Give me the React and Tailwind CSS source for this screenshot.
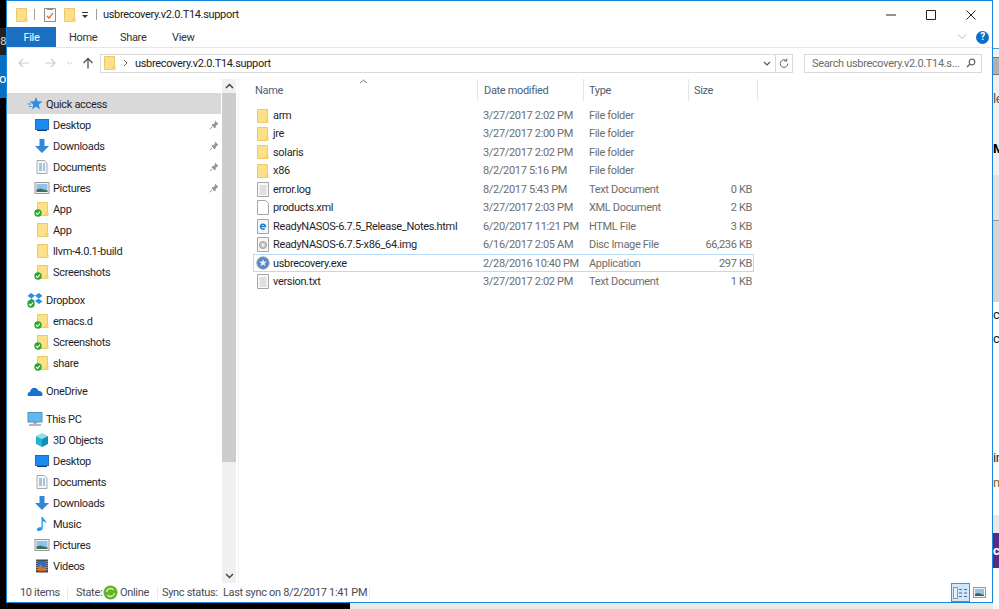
import React from "react";

const Check = () => (
  <svg width="8" height="8" viewBox="0 0 8 8" className="absolute left-0 bottom-0">
    <circle cx="4" cy="4" r="3.7" fill="#2aa52f" />
    <path d="M2 4l1.500 1.500L6 2.600" fill="none" stroke="#fff" strokeWidth="1.100" />
  </svg>
);

const Folder = ({ check }) => (
  <span className="relative inline-block w-[16px] h-[16px] shrink-0">
    <svg width="16" height="16" viewBox="0 0 16 16" className="block">
      <path d="M3.500 1.500h10v13h-10z" fill="#fde08a" stroke="#ecc969" />
      <path d="M11.500 11h3v4h-3z" fill="#f7d26e" />
    </svg>
    {check && <Check />}
  </span>
);

const Desktop = () => (
  <svg width="16" height="16" viewBox="0 0 16 16" className="shrink-0">
    <rect x="1.500" y="2.500" width="13" height="10" fill="#1a8cf0" stroke="#1b6fb8" />
    <path d="M3 13.500h10" stroke="#0b3f70" />
  </svg>
);
const Download = () => (
  <svg width="16" height="16" viewBox="0 0 16 16" className="shrink-0">
    <path d="M5.500 1h5v7h4.500L8 15 1 8h4.500z" fill="#2f88d8" />
  </svg>
);
const Doc = () => (
  <svg width="16" height="16" viewBox="0 0 16 16" className="shrink-0">
    <path d="M3 1.500h7.500l2.500 2.500v10.500H3z" fill="#f6f6f6" stroke="#a9a9a9" />
    <path d="M5 5h6M5 7h6M5 9h6M5 11h6" stroke="#3f9be0" strokeWidth="1" strokeDasharray="3 1" />
  </svg>
);
const Pics = () => (
  <svg width="16" height="16" viewBox="0 0 16 16" className="shrink-0">
    <rect x="1" y="2.500" width="14" height="11" fill="#f2f2f2" stroke="#9a9a9a" />
    <rect x="2.500" y="4" width="11" height="8" fill="#8fc3ee" />
    <path d="M2.500 12V9.500l4-1 7 2V12z" fill="#3f6f58" />
  </svg>
);
const Pin = () => (
  <svg width="10" height="10" viewBox="0 0 10 10">
    <path d="M6 .5l3.500 3.500-1.200.4-1.500 1.500-.2 1.800-1.100.6-3-3 .7-1 1.700-.3L6 2z" fill="#8f979f" />
    <path d="M3 7L.7 9.300" stroke="#8f979f" />
  </svg>
);
const Dropbox = () => (
  <span className="relative inline-block w-[16px] h-[16px] shrink-0">
    <svg width="16" height="16" viewBox="0 0 16 16" className="block">
      <path d="M4 1l4 2.500L4.500 6.500.5 4zM12 1L8 3.500l3.500 3 4-2.500zM4.500 6.500L.5 9.500 4 12l4-3zM11.500 6.500l4 3L12 12 8 9z" fill="#2b8de0" />
    </svg>
    <Check />
  </span>
);
const OneDrive = () => (
  <svg width="16" height="16" viewBox="0 0 16 16" className="shrink-0">
    <path d="M1 13c-1-2 0-4 2-4 .5-3 3-5 5.500-4 1.500.5 2.500 1.500 3 3 2-.5 4 1 4 3 0 1-.3 2-1 2z" fill="#1473d0" />
  </svg>
);
const PC = () => (
  <svg width="16" height="16" viewBox="0 0 16 16" className="shrink-0">
    <rect x="1" y="1.500" width="14" height="9.500" fill="#5fb8f3" stroke="#5c8fb5" />
    <path d="M6 12h4M2 14h12" stroke="#9a9fa5" strokeWidth="1.500" />
  </svg>
);
const Cube = () => (
  <svg width="16" height="16" viewBox="0 0 16 16" className="shrink-0">
    <path d="M2 4l6-3 6 3-6 3z" fill="#8be0ee" />
    <path d="M2 4l6 3v8l-6-3z" fill="#25b3d3" />
    <path d="M14 4L8 7v8l6-3z" fill="#0f8fb5" />
  </svg>
);
const Music = () => (
  <svg width="16" height="16" viewBox="0 0 16 16" className="shrink-0">
    <path d="M7.500 1h1.300c.3 2 3.500 3 3.700 6.500-1-1.500-2.500-2-3.700-2.300V12c0 2-2 3-4 3-1.500 0-2.300-1-1.800-2 .6-1.200 2.800-2 4.500-1.500z" fill="#1e9af0" />
  </svg>
);
const Videos = () => (
  <svg width="16" height="16" viewBox="0 0 16 16" className="shrink-0">
    <rect x="2" y="1.500" width="12" height="13" fill="#4a4a4a" />
    <rect x="4" y="3" width="8" height="10" fill="#1f6fd0" />
    <path d="M4 9l3-3 2 4 3-2v5H4z" fill="#d8702a" />
    <path d="M3 3v10M13 3v10" stroke="#ddd" strokeDasharray="1 1" />
  </svg>
);
const Star = () => (
  <svg width="16" height="16" viewBox="0 0 16 16" className="shrink-0">
    <path d="M9 1l1.700 4.300 4.800.3-3.700 3 1.200 4.700L9 10.700l-4 2.600 1.200-4.700-3.700-3 4.800-.3z" fill="#2f8fe0" />
    <path d="M4 8H.5M4.500 10.500H2" stroke="#2f8fe0" />
  </svg>
);

const iconFor = {
  folder: <Folder />,
  check: <Folder check />,
  desktop: <Desktop />,
  down: <Download />,
  doc: <Doc />,
  pics: <Pics />,
  music: <Music />,
  videos: <Videos />,
  cube: <Cube />,
  dropbox: <Dropbox />,
  onedrive: <OneDrive />,
  pc: <PC />,
  star: <Star />,
};

const NavRow = ({ icon, label, top, pin, active }) => (
  <div className={`h-[21px] flex items-center shrink-0 gap-[3px] ${top ? "pl-[20px]" : "pl-[27px]"} ${active ? "bg-[#d9d9d9]" : ""}`}>
    {iconFor[icon]}
    <span className="flex-1 pt-[1px] text-[#1f1f2b] whitespace-nowrap">{label}</span>
    {pin && <span className="mr-[2px] flex"><Pin /></span>}
  </div>
);

const TxtIcon = () => (
  <svg width="12" height="15" viewBox="0 0 12 15" className="shrink-0">
    <path d="M.5.500h11v14H.5z" fill="#fafafa" stroke="#a5a5a5" />
    <path d="M2.500 4h7M2.500 6h7M2.500 8h7M2.500 10h7M2.500 12h7" stroke="#c4c4c4" />
  </svg>
);
const BlankIcon = () => (
  <svg width="12" height="15" viewBox="0 0 12 15" className="shrink-0">
    <path d="M.5.500h8l3 3v11H.5z" fill="#fff" stroke="#a5a5a5" />
  </svg>
);
const HtmlIcon = () => (
  <svg width="12" height="15" viewBox="0 0 12 15" className="shrink-0">
    <path d="M.5.500h11v14H.5z" fill="#f6f6f6" stroke="#a5a5a5" />
    <path d="M3.500 7.500h5a2.500 2.500 0 1 0-.8 2" fill="none" stroke="#1c7fd6" strokeWidth="1.500" />
  </svg>
);
const ImgIcon = () => (
  <svg width="12" height="15" viewBox="0 0 12 15" className="shrink-0">
    <path d="M.5.500h11v14H.5z" fill="#f6f6f6" stroke="#a5a5a5" />
    <circle cx="6" cy="8" r="3.500" fill="#cfcfcf" stroke="#9a9a9a" />
    <circle cx="6" cy="8" r="1" fill="#fff" />
  </svg>
);
const ExeIcon = () => (
  <svg width="14" height="14" viewBox="0 0 14 14" className="shrink-0 -mx-[1px]">
    <circle cx="7" cy="7" r="6.200" fill="#5b86c4" stroke="#9aa8ba" />
    <path d="M7 3l1 2.800 3-.2-2.400 1.800.9 2.900L7 8.600 4.500 10.300l.9-2.900L3 5.600l3 .2z" fill="#eef3fa" />
  </svg>
);
const FileFolder = () => (
  <svg width="12" height="14" viewBox="0 0 12 14" className="shrink-0">
    <path d="M.5.500h10v13H.5z" fill="#fde08a" stroke="#ecc969" />
    <path d="M8.500 10h3v4h-3z" fill="#f7d26e" />
  </svg>
);

const files = [
  [<FileFolder key="a" />, "arm", "3/27/2017 2:02 PM", "File folder", ""],
  [<FileFolder key="b" />, "jre", "3/27/2017 2:00 PM", "File folder", ""],
  [<FileFolder key="c" />, "solaris", "3/27/2017 2:02 PM", "File folder", ""],
  [<FileFolder key="d" />, "x86", "8/2/2017 5:16 PM", "File folder", ""],
  [<TxtIcon key="e" />, "error.log", "8/2/2017 5:43 PM", "Text Document", "0 KB"],
  [<BlankIcon key="f" />, "products.xml", "3/27/2017 2:03 PM", "XML Document", "2 KB"],
  [<HtmlIcon key="g" />, "ReadyNASOS-6.7.5_Release_Notes.html", "6/20/2017 11:21 PM", "HTML File", "3 KB"],
  [<ImgIcon key="h" />, "ReadyNASOS-6.7.5-x86_64.img", "6/16/2017 2:05 AM", "Disc Image File", "66,236 KB"],
  [<ExeIcon key="i" />, "usbrecovery.exe", "2/28/2016 10:40 PM", "Application", "297 KB"],
  [<TxtIcon key="j" />, "version.txt", "3/27/2017 2:02 PM", "Text Document", "1 KB"],
];

const nav1 = [
  ["desktop", "Desktop", true],
  ["down", "Downloads", true],
  ["doc", "Documents", true],
  ["pics", "Pictures", true],
  ["check", "App"],
  ["folder", "App"],
  ["folder", "llvm-4.0.1-build"],
  ["check", "Screenshots"],
];
const nav2 = [
  ["check", "emacs.d"],
  ["check", "Screenshots"],
  ["check", "share"],
];
const nav3 = [
  ["cube", "3D Objects"],
  ["desktop", "Desktop"],
  ["doc", "Documents"],
  ["down", "Downloads"],
  ["music", "Music"],
  ["pics", "Pictures"],
  ["videos", "Videos"],
];

export default function App() {
  return (
    <div className="w-[999px] h-[609px] flex bg-black overflow-hidden font-['Roboto',sans-serif] text-[11px] tracking-[-0.33px] leading-none text-[#1f1f2b]">
      {/* desktop behind: left */}
      <div className="w-[6px] shrink-0 flex flex-col overflow-hidden text-white">
        <div className="h-[28px] bg-black" />
        <div className="h-[27px] bg-[#222] flex items-center justify-end text-[#ddd] whitespace-nowrap">08</div>
        <div className="h-[43px] bg-[#0a70c4] flex items-center justify-end whitespace-nowrap pt-[3px] text-[13px]">to</div>
        <div className="flex-1 bg-black" />
      </div>

      <div className="w-[987px] shrink-0 flex flex-col">
        {/* window */}
        <div className="h-[603px] shrink-0 bg-white border border-[#1a86d9] flex flex-col">
          {/* title bar */}
          <div className="h-[26px] shrink-0 flex items-center pl-[6px] pt-[1px]">
            <Folder />
            <span className="w-px h-[11px] bg-[#a0a0a0] ml-[5px] mr-[8px]" />
            <svg width="14" height="16" viewBox="0 0 14 16" className="shrink-0">
              <path d="M1.500 1.500h11v13h-11z" fill="#fafafa" stroke="#8d8d8d" />
              <path d="M4 2h6" stroke="#8d8d8d" strokeWidth="2" />
              <path d="M4 9l2 2 4-5" fill="none" stroke="#e0582a" strokeWidth="1.200" />
            </svg>
            <span className="ml-[4px] flex"><Folder /></span>
            <svg width="8" height="8" viewBox="0 0 8 8" className="ml-[4px] shrink-0">
              <path d="M1 1.500h6" stroke="#333" />
              <path d="M1 4h6L4 7z" fill="#333" />
            </svg>
            <span className="w-px h-[11px] bg-[#a0a0a0] ml-[7px] mr-[6px]" />
            <span className="text-[#222] whitespace-nowrap">usbrecovery.v2.0.T14.support</span>
            <div className="flex-1" />
            <svg width="10" height="10" viewBox="0 0 10 10" className="mr-[30px]"><path d="M0 5h10" stroke="#222" /></svg>
            <svg width="10" height="10" viewBox="0 0 10 10" className="mr-[30px]"><path d="M.5.500h9v9h-9z" fill="none" stroke="#222" /></svg>
            <svg width="10" height="10" viewBox="0 0 10 10" className="mr-[16px]"><path d="M.5.500l9 9M9.500.500l-9 9" stroke="#222" /></svg>
          </div>
          {/* ribbon tabs */}
          <div className="h-[21px] shrink-0 flex items-stretch border-b border-[#e6e6e6]">
            <div className="w-[49px] bg-[#1a6fc0] text-white flex items-center justify-center pt-[1px]">File</div>
            <div className="w-[51px] flex items-center pl-[13px] pt-[1px] text-[#333]">Home</div>
            <div className="w-[51px] flex items-center pl-[13px] pt-[1px] text-[#333]">Share</div>
            <div className="w-[51px] flex items-center pl-[14px] pt-[1px] text-[#333]">View</div>
            <div className="flex-1" />
            <div className="flex items-center gap-[9px] pr-[3px]">
              <svg width="10" height="6" viewBox="0 0 10 6"><path d="M1 .5l4 4 4-4" fill="none" stroke="#b5b5b5" /></svg>
              <span className="w-[13px] h-[13px] rounded-full bg-[#0a6fc8] text-white text-[10px] font-bold flex items-center justify-center">?</span>
            </div>
          </div>
          {/* address row */}
          <div className="h-[30px] shrink-0 flex items-center pl-[11px]">
            <svg width="12" height="10" viewBox="0 0 12 10" className="shrink-0"><path d="M11 5H1.500M5 1L1 5l4 4" fill="none" stroke="#cfcfcf" strokeWidth="1.200" /></svg>
            <svg width="12" height="10" viewBox="0 0 12 10" className="ml-[14px] shrink-0"><path d="M1 5h9.500M7 1l4 4-4 4" fill="none" stroke="#cfcfcf" strokeWidth="1.200" /></svg>
            <svg width="7" height="5" viewBox="0 0 7 5" className="ml-[10px] shrink-0"><path d="M1 1l2.500 2.500L6 1" fill="none" stroke="#cfcfcf" /></svg>
            <svg width="12" height="12" viewBox="0 0 12 12" className="ml-[9px] shrink-0"><path d="M6 11.500V1.500M1.500 6L6 1.500 10.500 6" fill="none" stroke="#555" strokeWidth="1.300" /></svg>
            <div className="ml-[6px] w-[693px] h-[19px] border border-[#d9d9d9] flex items-center">
              <Folder />
              <svg width="5" height="8" viewBox="0 0 5 8" className="ml-[6px]"><path d="M1 1l3 3-3 3" fill="none" stroke="#666" /></svg>
              <span className="ml-[7px] text-[#222] whitespace-nowrap">usbrecovery.v2.0.T14.support</span>
              <div className="flex-1" />
              <svg width="8" height="5" viewBox="0 0 8 5"><path d="M1 1l3 3 3-3" fill="none" stroke="#555" strokeWidth="1.200" /></svg>
              <span className="w-px h-full bg-[#d9d9d9] ml-[4px]" />
              <svg width="16" height="11" viewBox="0 0 16 11">
                <path d="M11.800 5.500a3.800 3.800 0 1 1-1.300-2.800M10.800.5v2.600H8.200" fill="none" stroke="#666" />
              </svg>
            </div>
            <div className="ml-[11px] w-[178px] h-[19px] border border-[#d9d9d9] flex items-center pl-[7px] pr-[5px] text-[#6d6d6d]">
              <span className="flex-1 whitespace-nowrap">Search usbrecovery.v2.0.T14.s...</span>
              <svg width="10" height="10" viewBox="0 0 10 10"><circle cx="6" cy="4" r="2.800" fill="none" stroke="#666" strokeWidth="1.200" /><path d="M4 6L1 9" stroke="#666" strokeWidth="1.400" /></svg>
            </div>
          </div>
          {/* main */}
          <div className="flex-1 flex min-h-0">
            {/* nav */}
            <div className="w-[214px] shrink-0 pt-[15px] flex flex-col overflow-hidden">
              <NavRow top active icon="star" label="Quick access" />
              {nav1.map(([i, l, p], k) => <NavRow key={k} icon={i} label={l} pin={p} />)}
              <div className="h-[7px] shrink-0" />
              <NavRow top icon="dropbox" label="Dropbox" />
              {nav2.map(([i, l], k) => <NavRow key={k} icon={i} label={l} />)}
              <div className="h-[7px] shrink-0" />
              <NavRow top icon="onedrive" label="OneDrive" />
              <div className="h-[7px] shrink-0" />
              <NavRow top icon="pc" label="This PC" />
              {nav3.map(([i, l], k) => <NavRow key={k} icon={i} label={l} />)}
            </div>
            {/* scrollbar */}
            <div className="w-[14px] shrink-0 ml-px bg-[#f0f0f0] flex flex-col mt-[1px]">
              <div className="h-[14px] shrink-0 flex items-center justify-center">
                <svg width="9" height="6" viewBox="0 0 9 6"><path d="M1 5l3.500-3.500L8 5" fill="none" stroke="#444" strokeWidth="1.500" /></svg>
              </div>
              <div className="h-[369px] shrink-0 bg-[#cdcdcd]" />
              <div className="flex-1" />
              <div className="h-[14px] shrink-0 flex items-center justify-center">
                <svg width="9" height="6" viewBox="0 0 9 6"><path d="M1 1l3.500 3.500L8 1" fill="none" stroke="#444" strokeWidth="1.500" /></svg>
              </div>
            </div>
            <div className="w-px ml-[2px] bg-[#f2f2f2]" />
            {/* list */}
            <div className="flex-1 pl-[14px] pt-[1px] flex flex-col">
              <div className="relative h-[22px] shrink-0 w-[505px] grid grid-cols-[224px_106px_105px_70px] text-[#4c607a]">
                <div className="pl-[2px] flex items-center">Name</div>
                <div className="border-l border-[#e5e5e5] pl-[6px] flex items-center">Date modified</div>
                <div className="border-l border-[#e5e5e5] pl-[5px] flex items-center">Type</div>
                <div className="border-x border-[#e5e5e5] pl-[5px] flex items-center">Size</div>
                <svg width="9" height="5" viewBox="0 0 9 5" className="absolute left-[106px] top-0"><path d="M1 4l3.500-3L8 4" fill="none" stroke="#777" /></svg>
              </div>
              <div className="pt-[5.3px] w-[501px]">
                {files.map(([ic, n, d, t, s], k) => (
                  <div key={k} className={`h-[18.44px] grid grid-cols-[220px_106px_105px_70px] whitespace-nowrap text-[#6d6d6d] ${k === 8 ? "outline outline-1 -outline-offset-1 outline-[#b8dcf5]" : ""}`}>
                    <div className="flex items-center pl-[4px] gap-[4px] text-[#1f1f2b]">
                      <span className="w-[12px] flex justify-center">{ic}</span>
                      <span>{n}</span>
                    </div>
                    <div className="flex items-center pl-[10px]">{d}</div>
                    <div className="flex items-center pl-[10px]">{t}</div>
                    <div className="flex items-center justify-end pr-[2px]">{s}</div>
                  </div>
                ))}
              </div>
            </div>
          </div>
          {/* status bar */}
          <div className="h-[19px] shrink-0 flex items-center text-[#4a4a55] pl-[13px] whitespace-nowrap">
            <span className="w-[47px]">10 items</span>
            <span className="w-px h-[12px] bg-[#e8e8e8]" />
            <span className="ml-[8px] w-[27px]">State:</span>
            <svg width="15" height="15" viewBox="0 0 15 15" className="shrink-0">
              <circle cx="7.500" cy="7.500" r="7" fill="#5cb531" />
              <path d="M3.500 7a4 4 0 0 1 7-2M11.500 8a4 4 0 0 1-7 2" fill="none" stroke="#f5e87a" strokeWidth="1.500" />
            </svg>
            <span className="ml-[2px] w-[37px]">Online</span>
            <span className="w-px h-[12px] bg-[#e8e8e8]" />
            <span className="ml-[4px] w-[61px]">Sync status:</span>
            <span className="w-[146px]">Last sync on 8/2/2017 1:41 PM</span>
            <span className="w-px h-[12px] bg-[#e8e8e8]" />
            <div className="flex-1" />
            <div className="w-[19px] h-[19px] bg-[#cce8ff] border border-[#26a0da] flex items-center justify-center">
              <svg width="15" height="12" viewBox="0 0 15 12">
                <rect x=".5" y=".5" width="4" height="11" fill="#eee" stroke="#9a9a9a" />
                <path d="M6 2.500h3M11 2.500h3M6 6h3M11 6h3M6 9.500h3M11 9.500h3" stroke="#667" />
              </svg>
            </div>
            <svg width="13" height="11" viewBox="0 0 13 11" className="ml-[3px] mr-[6px]">
              <rect x=".5" y=".5" width="12" height="10" fill="#f2f2f2" stroke="#9a9a9a" />
              <rect x="2" y="2" width="9" height="7" fill="#8fc3ee" />
              <path d="M2 9V7l3-1 6 2v1z" fill="#3f5f50" />
            </svg>
          </div>
        </div>
        {/* below the window */}
        <div className="flex-1 flex">
          <div className="w-[344px] bg-black" />
          <div className="flex-1 bg-[#e9e9e9]" />
        </div>
      </div>

      {/* desktop behind: right */}
      <div className="w-[6px] shrink-0 flex flex-col overflow-hidden bg-[#f0f0f0] text-[#555] text-[13px] whitespace-nowrap">
        <div className="h-[49px] shrink-0 bg-white border-b border-[#4a9ad8]" />
        <div className="h-[8px] shrink-0 bg-[#f0f0f0]" />
        <div className="h-[18px] shrink-0 bg-[#b0b0b0] border-y border-[#777]" />
        <div className="h-[46px] shrink-0 flex items-center">le</div>
        <div className="h-[54px] shrink-0 flex items-center text-black font-bold">M</div>
        <div className="h-[46px] shrink-0 bg-[#e2e2e2] border-b border-[#999]" />
        <div className="h-[81px] shrink-0 bg-[#d5d5d5]" />
        <div className="h-[24px] shrink-0 bg-white flex items-center text-[#222]">ce</div>
        <div className="h-[24px] shrink-0 bg-white flex items-center text-[#222]">c</div>
        <div className="h-[95px] shrink-0 bg-white" />
        <div className="h-[25px] shrink-0 bg-white flex items-center text-[#222]">in</div>
        <div className="h-[25px] shrink-0 bg-white flex items-center text-[#8a5a20]">m</div>
        <div className="h-[20px] shrink-0 bg-white" />
        <div className="h-[18px] shrink-0 bg-[#e8e8e8]" />
        <div className="h-[35px] shrink-0 bg-[#5a2a82] flex items-center text-white font-bold">c</div>
        <div className="flex-1 bg-white" />
      </div>
    </div>
  );
}
